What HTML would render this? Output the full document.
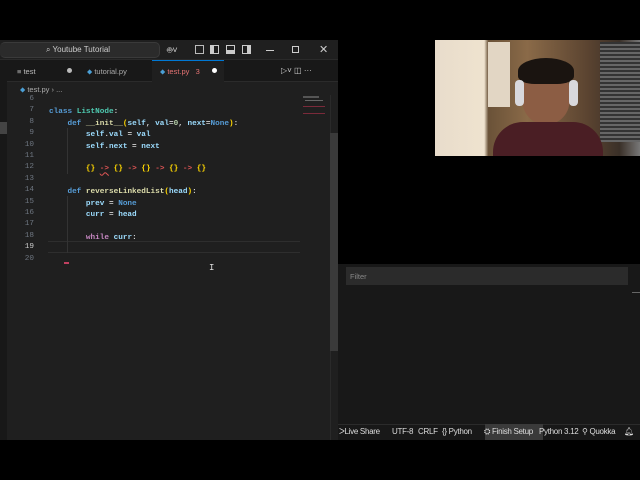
<!DOCTYPE html>
<html><head><meta charset="utf-8"><style>
*{margin:0;padding:0;box-sizing:border-box}
body{width:640px;height:480px;background:#000;position:relative;overflow:hidden;font-family:"Liberation Sans",sans-serif;color:#ccc}
.a{position:absolute}
.code{font-family:"Liberation Mono",monospace;font-size:7.7px;white-space:pre;line-height:11.4px;font-weight:bold}
.ln{position:absolute;left:14px;width:20px;text-align:right;color:#6e7681;font-family:"Liberation Mono",monospace;font-size:7.7px}
.k{color:#569cd6}.f{color:#dcdcaa}.v{color:#9cdcfe}.p{color:#c586c0}.y{color:#ffd700}.r{color:#e05555}.w{color:#d4d4d4}.t{color:#4ec9b0}.n{color:#b5cea8}
.s{position:absolute;top:427px;font-size:8px;color:#ddd;white-space:nowrap;letter-spacing:-0.3px}
</style></head><body>
<div class="a" style="left:0;top:40px;width:338px;height:400px;background:#1f1f1f"></div>
<div class="a" style="left:0;top:40px;width:338px;height:20px;background:#1f1f1f;border-bottom:1px solid #2a2a2a"></div>
<div class="a" style="left:0;top:42px;width:160px;height:16px;background:#2b2b2b;border:1px solid #3a3a3a;border-radius:5px;border-left:none"></div>
<div class="a" style="left:46px;top:45px;font-size:8px;color:#ccc">⌕ Youtube Tutorial</div>
<div class="a" style="left:167px;top:44px;font-size:9px;color:#ccc">🤖︎˅</div>
<div class="a" style="left:195px;top:45px;width:9px;height:9px;border:1px solid #bbb"></div>
<div class="a" style="left:210px;top:45px;width:9px;height:9px;border:1px solid #ccc;border-left:4px solid #ccc"></div>
<div class="a" style="left:226px;top:45px;width:9px;height:9px;border:1px solid #ccc;border-bottom:4px solid #ccc"></div>
<div class="a" style="left:242px;top:45px;width:9px;height:9px;border:1px solid #ccc;border-right:4px solid #ccc"></div>
<div class="a" style="left:266px;top:50px;width:8px;height:1px;background:#ccc"></div>
<div class="a" style="left:292px;top:46px;width:7px;height:7px;border:1px solid #ccc"></div>
<div class="a" style="left:319px;top:43px;font-size:11px;color:#ccc">✕</div>
<div class="a" style="left:0;top:60px;width:7px;height:380px;background:#181818"></div>
<div class="a" style="left:0;top:122px;width:7px;height:12px;background:#444"></div>
<div class="a" style="left:7px;top:60px;width:331px;height:22px;background:#181818;border-bottom:1px solid #2b2b2b"></div>
<div class="a" style="left:152px;top:60px;width:72px;height:22px;background:#1f1f1f;border-top:1px solid #0078d4"></div>
<div class="a" style="left:17px;top:67px;font-size:7.5px;color:#bbb">≡ test</div>
<div class="a" style="left:67px;top:68px;width:5px;height:5px;border-radius:50%;background:#bbb"></div>
<div class="a" style="left:87px;top:67px;font-size:7.5px;color:#aaa"><span style="color:#4b9fd5">⬥</span> tutorial.py</div>
<div class="a" style="left:160px;top:67px;font-size:7.5px;color:#e57373"><span style="color:#4b9fd5">⬥</span> test.py &nbsp;&nbsp;3</div>
<div class="a" style="left:212px;top:68px;width:5px;height:5px;border-radius:50%;background:#fff"></div>
<div class="a" style="left:281px;top:66px;font-size:8px;color:#ccc">▷˅ ◫ ···</div>
<div class="a" style="left:20px;top:85px;font-size:7.5px;color:#aaa"><span style="color:#4b9fd5">⬥</span> test.py › ...</div>
<div class="ln" style="top:94px;line-height:11.4px">6<br>7<br>8<br>9<br>10<br>11<br>12<br>13<br>14<br>15<br>16<br>17<br>18<br><span style="color:#ccc">19</span><br>20</div>
<div class="a" style="left:48px;top:241px;width:252px;height:12px;border-top:1px solid #2e2e2e;border-bottom:1px solid #2e2e2e"></div>
<div class="a" style="left:67px;top:128px;width:1px;height:46px;background:#333"></div>
<div class="a" style="left:67px;top:196px;width:1px;height:57px;background:#333"></div>
<div class="code a" style="left:49px;top:96px"> 
<span class="k">class</span> <span class="t">ListNode</span><span class="w">:</span>
    <span class="k">def</span> <span class="f">__init__</span><span class="y">(</span><span class="v">self</span><span class="w">, </span><span class="v">val</span><span class="w">=</span><span class="n">0</span><span class="w">, </span><span class="v">next</span><span class="w">=</span><span class="k">None</span><span class="y">)</span><span class="w">:</span>
        <span class="v">self</span><span class="w">.</span><span class="v">val</span><span class="w"> = </span><span class="v">val</span>
        <span class="v">self</span><span class="w">.</span><span class="v">next</span><span class="w"> = </span><span class="v">next</span>

        <span class="y">{}</span> <span class="r" style="text-decoration:underline wavy #e05555">-&gt;</span> <span class="y">{}</span> <span class="r">-&gt;</span> <span class="y">{}</span> <span class="r">-&gt;</span> <span class="y">{}</span> <span class="r">-&gt;</span> <span class="y">{}</span>

    <span class="k">def</span> <span class="f">reverseLinkedList</span><span class="y">(</span><span class="v">head</span><span class="y">)</span><span class="w">:</span>
        <span class="v">prev</span><span class="w"> = </span><span class="k">None</span>
        <span class="v">curr</span><span class="w"> = </span><span class="v">head</span>

        <span class="p">while</span> <span class="v">curr</span><span class="w">:</span>
</div>
<div class="a" style="left:64px;top:262px;width:5px;height:2px;background:#c04060"></div>
<div class="a" style="left:209px;top:263px;font-size:9px;color:#ddd;font-family:'Liberation Mono'">I</div>
<div class="a" style="left:303px;top:96px;width:16px;height:2px;background:#555"></div>
<div class="a" style="left:305px;top:100px;width:18px;height:1px;background:#666"></div>
<div class="a" style="left:303px;top:106px;width:22px;height:1px;background:#7a2a3a"></div>
<div class="a" style="left:303px;top:113px;width:22px;height:1px;background:#7a2a3a"></div>
<div class="a" style="left:330px;top:95px;width:1px;height:345px;background:#2a2a2a"></div>
<div class="a" style="left:330px;top:133px;width:8px;height:218px;background:#3a3a3a"></div>
<div class="a" style="left:435px;top:40px;width:205px;height:116px;background:linear-gradient(90deg,#e8dccb 0,#efe3cf 24%,#6a5238 26%,#8a6a48 45%,#5a4330 75%,#3a3028 90%,#777 100%)"></div>
<div class="a" style="left:488px;top:42px;width:22px;height:65px;background:#e2d6c4"></div>
<div class="a" style="left:600px;top:42px;width:40px;height:100px;background:repeating-linear-gradient(0deg,#666 0,#666 2px,#333 2px,#333 4px)"></div>
<div class="a" style="left:522px;top:68px;width:48px;height:56px;border-radius:45%;background:#8c5d44"></div>
<div class="a" style="left:518px;top:58px;width:56px;height:26px;border-radius:50% 50% 30% 30%;background:#1a1410"></div>
<div class="a" style="left:515px;top:80px;width:9px;height:26px;border-radius:4px;background:#d8d8dc"></div>
<div class="a" style="left:569px;top:80px;width:9px;height:26px;border-radius:4px;background:#d8d8dc"></div>
<div class="a" style="left:493px;top:122px;width:110px;height:34px;border-radius:30px 30px 0 0;background:#4a1e24"></div>
<div class="a" style="left:338px;top:264px;width:302px;height:160px;background:#181818"></div>
<div class="a" style="left:346px;top:267px;width:282px;height:18px;background:#2b2b2b"></div>
<div class="a" style="left:350px;top:272px;font-size:7.5px;color:#888">Filter</div>
<div class="a" style="left:632px;top:292px;width:8px;height:1px;background:#666"></div>
<div class="a" style="left:338px;top:424px;width:302px;height:16px;background:#181818;border-top:1px solid #2b2b2b"></div>
<div class="a" style="left:485px;top:424px;width:58px;height:16px;background:#3a3a3a"></div>
<div class="s" style="left:339px">ᐳLive Share</div>
<div class="s" style="left:392px">UTF-8</div>
<div class="s" style="left:418px">CRLF</div>
<div class="s" style="left:442px">{} Python</div>
<div class="s" style="left:484px">⛭ Finish Setup</div>
<div class="s" style="left:539px">Python 3.12</div>
<div class="s" style="left:582px">⚲ Quokka</div>
<div class="s" style="left:624px">🔔︎</div>
</body></html>
